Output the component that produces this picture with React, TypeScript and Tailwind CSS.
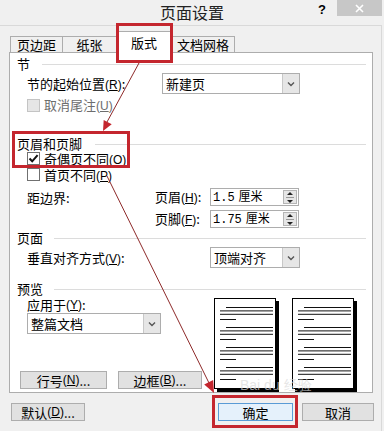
import React from 'react';

const font = { fontFamily: '"Noto Sans CJK SC", "Liberation Sans", sans-serif' };

function Key({ k }: { k: string }) {
  return (
    <span className="font-['Liberation_Sans'] text-[12px]">
      (<span className="underline">{k}</span>)
    </span>
  );
}

function Chevron() {
  return (
    <svg width="8" height="6" viewBox="0 0 8 6">
      <path d="M1 1.5 L4 4.5 L7 1.5" fill="none" stroke="#555" strokeWidth="1.4" />
    </svg>
  );
}

function Select({ value, className }: { value: string; className: string }) {
  return (
    <div className={`h-[21px] border border-[#adadad] bg-white flex items-center ${className}`}>
      <span className="flex-1 pl-[3px] text-[13px] leading-none">{value}</span>
      <div className="w-[17px] h-full border-l border-[#c8c8c8] bg-[#e6e6e6] flex items-center justify-center">
        <Chevron />
      </div>
    </div>
  );
}

function Spin({ value }: { value: string }) {
  return (
    <div className="w-[89px] h-[18px] border border-[#adadad] bg-white flex items-center pr-[1px]">
      <span className="flex-1 pl-[2px] font-['Liberation_Mono'] text-[12px] leading-none">
        {value}
        <span className="ml-[4px] font-['Noto_Sans_CJK_SC']">厘米</span>
      </span>
      <div className="w-[14px] h-[14px] border border-[#b5b5b5] bg-[#e6e6e6] flex flex-col items-center justify-center gap-[2px]">
        <svg width="6" height="3" viewBox="0 0 6 3"><path d="M0 3 L3 0 L6 3 Z" fill="#222" /></svg>
        <div className="w-[8px] h-px bg-[#999]" />
        <svg width="6" height="3" viewBox="0 0 6 3"><path d="M0 0 L3 3 L6 0 Z" fill="#222" /></svg>
      </div>
    </div>
  );
}

function Check({ checked, disabled }: { checked?: boolean; disabled?: boolean }) {
  return (
    <div
      className={`w-[13px] h-[13px] border flex items-center justify-center mr-[4px] ${
        disabled ? 'border-[#c4c4c4] bg-[#e6e6e6]' : 'border-[#707070] bg-white'
      }`}
    >
      {checked && (
        <svg width="11" height="11" viewBox="0 0 11 11">
          <path d="M1.5 5.5 L4.2 8.3 L9.6 2.2" fill="none" stroke="#111" strokeWidth="2" />
        </svg>
      )}
    </div>
  );
}

function Heading({ label, line }: { label: string; line: string }) {
  return (
    <div className="h-[16px] flex items-center">
      <span className="text-[13px] leading-none">{label}</span>
      <div className={`h-px bg-[#dcdcdc] mr-[6px] mt-[2px] flex-1 ${line}`} />
    </div>
  );
}

function Btn({ children, className }: { children: React.ReactNode; className: string }) {
  return (
    <div className={`h-[18px] border border-[#adadad] bg-[#e1e1e1] flex items-center justify-center text-[13px] leading-none ${className}`}>
      {children}
    </div>
  );
}

function PreviewPage() {
  const groups = [0, 1, 2, 3];
  return (
    <div className="w-[62px] h-[91px] border border-black bg-white shadow-[3px_3px_0_0_#000]">
      <svg width="60" height="89" viewBox="0 0 60 89">
        {groups.map((g) => {
          const y = 8.5 + g * 20;
          return (
            <g key={g} stroke="#111" strokeWidth="1">
              <line x1="11" y1={y} x2="58" y2={y} />
              <line x1="5" y1={y + 3.4} x2="58" y2={y + 3.4} />
              <line x1="5" y1={y + 6.8} x2="58" y2={y + 6.8} />
              <line x1="5" y1={y + 12} x2="21" y2={y + 12} />
            </g>
          );
        })}
      </svg>
    </div>
  );
}

export default function App() {
  return (
    <div className="relative w-[384px] h-[431px] bg-[#f0f0f0] overflow-hidden text-black" style={font}>
      {/* title bar */}
      <div className="relative h-[25px] flex items-center justify-center">
        <span className="text-[16px] leading-none mt-[-2px] text-[#222]">页面设置</span>
        <span className="absolute left-[318px] top-[0px] text-[13px] font-bold font-['Liberation_Sans']">?</span>
        <div className="absolute left-[337px] top-0 w-[45px] h-[16px] bg-[#c7c7c7] flex items-center justify-center">
          <svg width="9" height="9" viewBox="0 0 9 9">
            <path d="M1 1 L8 8 M8 1 L1 8" stroke="#fff" strokeWidth="1.6" />
          </svg>
        </div>
      </div>

      <div className="w-[382px] h-[406px] border-t border-r border-[#d9d9d9] pt-[5px]">
        {/* tabs */}
        <div className="flex items-end h-[21px] ml-[10px] relative z-10">
          <div className="w-[53px] h-[16px] border border-b-0 border-[#adadad] bg-[#f0f0f0] flex items-center justify-center text-[13px] leading-none">页边距</div>
          <div className="w-[54px] h-[16px] border border-b-0 border-l-0 border-[#adadad] bg-[#f0f0f0] flex items-center justify-center text-[13px] leading-none">纸张</div>
          <div className="w-[55px] h-[22px] mb-[-1px] border border-b-0 border-l-0 border-[#adadad] bg-white flex items-center justify-center text-[13px] leading-none">版式</div>
          <div className="w-[63px] h-[16px] border border-b-0 border-l-0 border-[#adadad] bg-[#f0f0f0] flex items-center justify-center text-[13px] leading-none">文档网格</div>
        </div>

        {/* panel */}
        <div className="ml-[9px] w-[364px] h-[341px] bg-white border border-[#adadad] flex flex-col pl-[7px]">
          <div className="mt-[2px]">
            <Heading label="节" line="ml-[12px]" />
          </div>
          <div className="mt-[2px] h-[21px] flex items-center pl-[10px]">
            <span className="w-[135px] text-[13px] leading-none">
              节的起始位置<Key k="R" />:
            </span>
            <Select value="新建页" className="w-[138px]" />
          </div>
          <div className="mt-[3px] h-[16px] flex items-center pl-[10px] text-[#6d6d6d]">
            <Check disabled />
            <span className="text-[13px] leading-none">
              取消尾注<Key k="U" />
            </span>
          </div>

          <div className="mt-[22px]">
            <Heading label="页眉和页脚" line="ml-[13px]" />
          </div>
          <div className="h-[15px] flex items-center pl-[10px]">
            <Check checked />
            <span className="text-[13px] leading-none">
              奇偶页不同<Key k="O" />
            </span>
          </div>
          <div className="mt-[1px] h-[15px] flex items-center pl-[10px]">
            <Check />
            <span className="text-[13px] leading-none">
              首页不同<Key k="P" />
            </span>
          </div>
          <div className="mt-[6px] h-[18px] flex items-center pl-[10px]">
            <span className="w-[128px] text-[13px] leading-none">距边界:</span>
            <span className="w-[55px] text-[13px] leading-none">
              页眉<Key k="H" />:
            </span>
            <Spin value="1.5" />
          </div>
          <div className="mt-[4px] h-[18px] flex items-center pl-[10px]">
            <span className="w-[128px]" />
            <span className="w-[55px] text-[13px] leading-none">
              页脚<Key k="F" />:
            </span>
            <Spin value="1.75" />
          </div>

          <div className="mt-[1px]">
            <Heading label="页面" line="ml-[11px]" />
          </div>
          <div className="mt-[2px] h-[21px] flex items-center pl-[10px]">
            <span className="w-[183px] text-[13px] leading-none">
              垂直对齐方式<Key k="V" />:
            </span>
            <Select value="顶端对齐" className="w-[90px]" />
          </div>

          <div className="mt-[12px]">
            <Heading label="预览" line="ml-[11px]" />
          </div>
          <div className="flex">
            <div className="w-[197px] flex flex-col">
              <div className="mt-[1px] h-[15px] flex items-center pl-[10px] text-[13px] leading-none">
                应用于<Key k="Y" />:
              </div>
              <div className="mt-[1px] pl-[10px]">
                <Select value="整篇文档" className="w-[134px]" />
              </div>
              <div className="mt-[37px] flex gap-[11px] ml-[3px]">
                <Btn className="w-[87px]">
                  行号<Key k="N" />...
                </Btn>
                <Btn className="w-[84px]">
                  边框<Key k="B" />...
                </Btn>
              </div>
            </div>
            <div className="mt-[2px] flex gap-[16px]">
              <PreviewPage />
              <PreviewPage />
            </div>
          </div>
        </div>

        {/* bottom buttons */}
        <div className="mt-[10px] flex">
          <Btn className="ml-[11px] w-[74px]">
            默认<Key k="D" />...
          </Btn>
          <Btn className="ml-[133px] w-[75px] !border-[#5a9bd5] !bg-[#e5f1fb]">确定</Btn>
          <Btn className="ml-[9px] w-[72px]">取消</Btn>
        </div>
      </div>

      {/* watermark */}
      <div className="absolute left-[240px] top-[378px] text-[14px] text-[#dadada]/70 font-['Liberation_Sans'] leading-none pointer-events-none">
        Bai du 经验
      </div>

      {/* red annotation boxes */}
      <div className="absolute left-[116px] top-[23px] w-[57px] h-[40px] border-[3px] border-[#c4262e] z-20" />
      <div className="absolute left-[12px] top-[131px] w-[118px] h-[37px] border-[3px] border-[#c4262e] z-20" />
      <div className="absolute left-[212px] top-[395px] w-[86px] h-[33px] border-[3px] border-[#c4262e] z-20" />

      {/* arrows */}
      <svg className="absolute left-0 top-0 z-30 pointer-events-none" width="384" height="431" viewBox="0 0 384 431">
        <line x1="139" y1="63" x2="107" y2="122" stroke="#8e2a2a" strokeWidth="1" />
        <polygon points="103,131 111.7,124.3 103.7,120.1" fill="#c4262e" />
        <line x1="107" y1="176" x2="209" y2="383" stroke="#8e2a2a" strokeWidth="1" />
        <polygon points="214,393 213.2,380 204.2,384.4" fill="#c4262e" />
      </svg>
    </div>
  );
}
